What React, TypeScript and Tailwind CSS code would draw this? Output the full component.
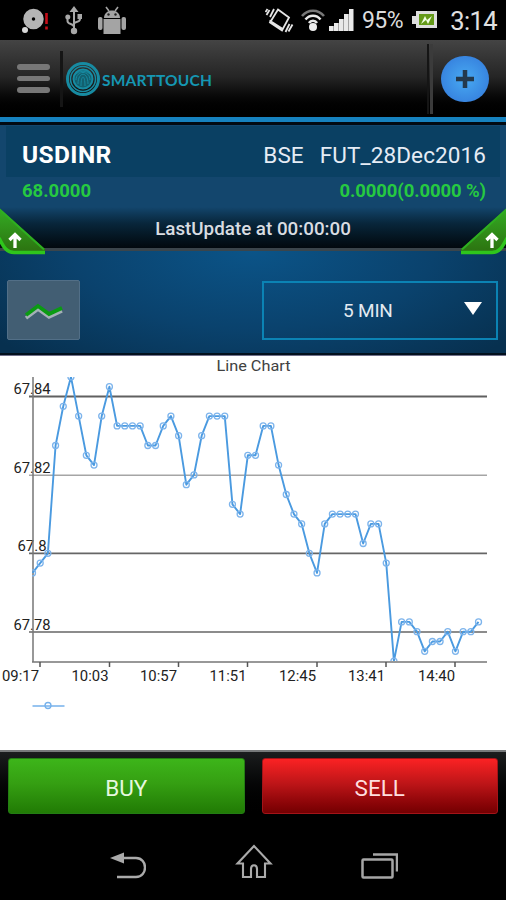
import type { ReactNode } from 'react';

// Distance below the 67.84 grid line, in ticks of 0.0025
const ticks = [
  18, 17, 16, 5, 1, -2, 2, 6, 7, 2, -1, 3, 3, 3, 3, 5, 5, 3, 2, 4, 9, 8, 4, 2, 2, 2, 11, 12, 6, 6,
  3, 3, 7, 10, 12, 13, 16, 18, 13, 12, 12, 12, 12, 15, 13, 13, 17, 27, 23, 23, 24, 26, 25, 25, 24,
  26, 24, 24, 23,
];

const points = ticks.map((t, i) => ({ x: 32.5 + i * 7.69, y: 41.5 + t * 9.8 }));

const gridLines = [
  { label: '67.84', y: 41.5, x: 13.5, width: 37, color: '#606060', stroke: 2 },
  { label: '67.82', y: 120.2, x: 13.5, width: 37, color: '#a5a5a5', stroke: 1.6 },
  { label: '67.8', y: 198.4, x: 17.5, width: 29, color: '#666666', stroke: 1.7 },
  { label: '67.78', y: 277, x: 13.5, width: 37, color: '#666666', stroke: 1.3 },
];

const times = [
  { label: '09:17', x: 2, tick: 40 },
  { label: '10:03', x: 71.5, tick: 109.5 },
  { label: '10:57', x: 140, tick: 178.5 },
  { label: '11:51', x: 209.5, tick: 247.5 },
  { label: '12:45', x: 279, tick: 317 },
  { label: '13:41', x: 348, tick: 386 },
  { label: '14:40', x: 418, tick: 455 },
];

function StatusBar() {
  return (
    <div className="h-10 bg-black flex items-center justify-between pl-[21px] pr-[9px]">
      <div className="flex items-center">
        <svg width="28" height="26" viewBox="0 0 28 26">
          <circle cx="12.5" cy="12" r="6" fill="none" stroke="#b4b4b4" strokeWidth="8.5" />
          <circle cx="4" cy="23" r="3" fill="#d8d8d8" />
          <path d="M25.5 6v11M25.5 19.5v3" stroke="#c40d18" strokeWidth="2.6" />
        </svg>
        <svg className="ml-[16px]" width="17" height="30" viewBox="0 0 17 30">
          <path d="M9 6v20M9 22C9 18 2.5 20 2.5 16v-4M9 19c0-3 6-1 6-5v-3" fill="none" stroke="#a8a8a8" strokeWidth="2" />
          <path d="M9 1l4.5 6h-9z" fill="#a8a8a8" />
          <circle cx="9" cy="26" r="3.2" fill="#a8a8a8" />
          <circle cx="2.8" cy="12" r="2.5" fill="#a8a8a8" />
          <path d="M12.5 9h4.5v5h-4.5z" fill="#a8a8a8" />
        </svg>
        <svg className="ml-[15px]" width="30" height="30" viewBox="0 0 30 30" fill="#a4a4a4">
          <path d="M7 13C7 3 23 3 23 13z" />
          <path d="M9 2l3 4M21 2l-3 4" stroke="#a4a4a4" strokeWidth="1.6" />
          <circle cx="11.5" cy="9.5" r="1.2" fill="#222" />
          <circle cx="18.5" cy="9.5" r="1.2" fill="#222" />
          <rect x="6.5" y="14" width="17" height="15" />
          <rect x="1" y="12" width="4.5" height="13" rx="2" />
          <rect x="24.5" y="12" width="4.5" height="13" rx="2" />
        </svg>
      </div>
      <div className="flex items-center">
        <svg width="29" height="28" viewBox="0 0 29 28" fill="none" stroke="#e6e6e6" strokeWidth="1.8">
          <path d="M13 3.5l11 8-7 13-12-8zM4.5 14.5l12.5 8" />
          <path d="M1.5 9l3-5M5 11l4-8M.5 6l2-3M24.5 18l-4 8M27.5 18.5l-4 7" />
        </svg>
        <svg className="ml-[7px]" width="24" height="24" viewBox="0 0 24 24" fill="none" strokeWidth="2.6">
          <path d="M1 8C7 1 17 1 23 8" stroke="#777" />
          <path d="M4.5 11.5c4-5 11-5 15 0" stroke="#e8e8e8" />
          <path d="M8 15c2-3 6-3 8 0" stroke="#e8e8e8" />
          <circle cx="12" cy="19" r="4" fill="#eee" />
        </svg>
        <svg className="ml-[4px]" width="25" height="24" viewBox="0 0 25 24" fill="#e9e9e9">
          <path d="M0 18h4.7v5H0zM5 15h4.7v8H5zM10 11h4.7v12H10zM15 6h4.7v17H15zM20 1h4.5v22H20z" />
        </svg>
        <span className="ml-[8px] w-[42px] text-[23px] leading-10 tracking-[-0.6px] text-[#dcdcdc] whitespace-nowrap relative top-px">95%</span>
        <svg className="ml-[8px]" width="26" height="20" viewBox="0 0 26 20">
          <path d="M4 1h21v17H4v-4H0V6h4z" fill="#dedede" />
          <rect x="7" y="4" width="15" height="11" fill="#649a18" />
          <path d="M9 14l4-8 2 4 5-4-4 8-2-4z" fill="#f1ffe4" />
        </svg>
        <span className="ml-[12px] w-[47px] text-[25.5px] leading-10 tracking-[-0.6px] text-[#e0e0e0] whitespace-nowrap text-right relative top-px">3:14</span>
      </div>
    </div>
  );
}

function Header() {
  return (
    <div className="h-[85px] border-b-[3px] border-[#020a12] bg-[#1682bf]">
      <div className="h-[77px] flex items-center bg-linear-to-b from-[#444444] via-[#252525] via-48% to-black">
        <div className="ml-[17px] w-[33px] flex flex-col gap-[6px]">
          <div className="h-[5.5px] rounded-sm bg-[#777777]" />
          <div className="h-[5.5px] rounded-sm bg-[#777777]" />
          <div className="h-[5.5px] rounded-sm bg-[#777777]" />
        </div>
        <div className="ml-[10px] w-[3px] h-[56px] bg-[#151515]" />
        <div className="ml-[3px] flex items-center">
          <svg width="34" height="36" viewBox="0 0 34 36" fill="none" stroke="#178ba2">
            <circle cx="17" cy="18" r="15.5" strokeWidth="3" />
            <circle cx="17" cy="18" r="12.5" strokeWidth="1.5" />
            <circle cx="17" cy="18" r="9.5" strokeWidth="2" fill="#12606f" />
            <path d="M10 19c0-10 14-10 14 0M12 23c0-13 10-13 10 0M15 25c0-12 4-12 4 0M9 14c4-5 12-5 16 0" strokeWidth="1" />
          </svg>
          <span className="ml-[2px] font-['Lato'] font-bold text-[15.5px] leading-6 tracking-[0.2px] text-[#1597b3] whitespace-nowrap relative top-px">
            SMARTTOUCH
          </span>
        </div>
        <div className="ml-auto w-[6px] h-[70px] border-l-2 border-r-[3px] border-l-[#151515] border-r-[#3b3b3b]" />
        <button className="ml-[8px] mr-[17px] w-[48px] h-[46px] rounded-full flex items-center justify-center bg-radial from-[#49aaf2] to-[#3275d8]">
          <svg width="20" height="20" viewBox="0 0 20 20">
            <path d="M10 1v18M1 10h18" stroke="#24394c" strokeWidth="4.5" />
          </svg>
        </button>
      </div>
    </div>
  );
}

function Corner({ side }: { side: 'left' | 'right' }) {
  return (
    <svg
      className={side === 'left' ? 'absolute left-0 top-[82px]' : 'absolute right-0 top-[82px] -scale-x-100'}
      width="46"
      height="49"
      viewBox="0 0 46 49"
    >
      <defs>
        <linearGradient id={`corner-${side}`} x1="0" y1="0" x2="0" y2="1">
          <stop offset="0" stopColor="#34ae24" />
          <stop offset="1" stopColor="#2c7110" />
        </linearGradient>
      </defs>
      <path d="M-2 0L45 42v4H14C6 46 3 40 -2 32z" fill={`url(#corner-${side})`} />
      <path d="M-1 2L44 42.5" fill="none" stroke="#2eae20" strokeWidth="2" />
      <path d="M-1 31C4 41 7 45.5 14 45.5H45" fill="none" stroke="#2fc51c" strokeWidth="3.5" />
    </svg>
  );
}

function UpArrow() {
  return (
    <svg width="16" height="18" viewBox="0 0 16 18">
      <path d="M8 17V4M2.5 9L8 3.5 13.5 9" fill="none" stroke="#fff" strokeWidth="3.3" />
    </svg>
  );
}

function Quote() {
  return (
    <div className="relative h-[126px] bg-[#13466d] pt-px">
      <div className="mx-[6px] h-[51px] bg-[#0a4063] pl-4 pr-[14px] pt-[3px] flex justify-between leading-[52px] whitespace-nowrap text-white">
        <span className="text-[24.5px] font-bold tracking-[0.4px]">USDINR</span>
        <span className="text-[22.5px] tracking-[0.1px] text-[#e6ecf5]">
          BSE<span className="ml-[16px]">FUT_28Dec2016</span>
        </span>
      </div>
      <div className="h-[30px] pl-[22px] pr-5 flex justify-between text-[18.5px] font-bold leading-[28px] text-[#26c941]">
        <span>68.0000</span>
        <span className="tracking-[-0.1px]">0.0000(0.0000 %)</span>
      </div>
      <div className="h-[44px] border-b-[3px] border-[#3b454b] bg-linear-to-b from-[#13466d] via-[#08263b] via-40% to-[#02090e] text-center text-[18.8px] font-medium leading-[45px] text-[#d9dde2]">
        LastUpdate at 00:00:00
      </div>
      <Corner side="left" />
      <Corner side="right" />
      <div className="absolute left-[7px] top-[106px]">
        <UpArrow />
      </div>
      <div className="absolute right-[6px] top-[106px]">
        <UpArrow />
      </div>
    </div>
  );
}

function Toolbar() {
  return (
    <div className="h-[104px] border-b-[2px] border-[#02101d] flex items-start justify-between pl-[7px] pr-2 pt-[29px] bg-[radial-gradient(ellipse_65%_140%_at_50%_0%,#0b5488_0%,#0a426d_55%,#07304f_100%)]">
      <button className="w-[73px] h-[60px] rounded-xs border border-[#526f87] bg-[#425e73] flex items-center justify-center">
        <svg className="mt-1" width="38" height="18" viewBox="0 0 38 18" fill="none">
          <path d="M1 15l12-9 11 8 13-6" stroke="#a4b0b6" strokeWidth="3.5" />
          <path d="M1 12l12-9 11 8 13-6" stroke="#0a9b12" strokeWidth="3.8" />
        </svg>
      </button>
      <button className="mt-px w-[236px] h-[59px] border-2 border-[#0b83b4] flex items-center">
        <span className="ml-[79px] text-[19px] text-[#e4eaf0] tracking-[-0.2px] pt-0.5">5 MIN</span>
        <svg className="ml-auto mr-[13px] mb-1" width="20" height="14" viewBox="0 0 20 14">
          <path d="M1 0h18l-9 13z" fill="#fff" />
        </svg>
      </button>
    </div>
  );
}

function LineChart() {
  const line = points.map((p) => `${p.x},${p.y}`).join(' ');

  return (
    <svg className="block bg-white" width="506" height="395" viewBox="0 0 506 395">
      <defs>
        <clipPath id="plot">
          <rect x="32" y="22" width="455" height="284" />
        </clipPath>
      </defs>
      <path d="M0 .5h506" stroke="#70708a" />
      <text x="216.5" y="16" textLength="74" lengthAdjust="spacingAndGlyphs" className="text-[15px]" fill="#414141">
        Line Chart
      </text>

      {gridLines.map((g) => (
        <g key={g.label}>
          <path d={`M29 ${g.y}H487`} stroke={g.color} strokeWidth={g.stroke} />
          <text x={g.x} y={g.y - 2.5} textLength={g.width} lengthAdjust="spacingAndGlyphs" className="text-[14.5px]" fill="#222">
            {g.label}
          </text>
        </g>
      ))}
      <path d="M33 22v285M32 307h455" fill="none" stroke="#777" strokeWidth="1.5" />
      {times.map((t) => (
        <g key={t.label}>
          <path d={`M${t.tick} 307v5`} stroke="#555" strokeWidth="1.5" />
          <text x={t.x} y="326" textLength="37" lengthAdjust="spacingAndGlyphs" className="text-[14.5px]" fill="#222">
            {t.label}
          </text>
        </g>
      ))}

      <g clipPath="url(#plot)" fill="none" stroke="#4a9ae0">
        <polyline points={line} strokeWidth="1.9" strokeLinejoin="round" />
        {points.map((p) => (
          <circle key={p.x} cx={p.x} cy={p.y} r="3" stroke="#7db4ec" strokeWidth="1.3" />
        ))}
      </g>
      <path d="M32.5 351h32" stroke="#75b1eb" strokeWidth="1.5" />
      <circle cx="48" cy="350.5" r="3" fill="none" stroke="#75b1eb" strokeWidth="1.3" />
    </svg>
  );
}

function TradeButton({ className, children }: { className: string; children: ReactNode }) {
  return (
    <button className={`flex-1 h-[56px] rounded-[3px] border text-[22.5px] leading-none pt-1 ${className}`}>
      {children}
    </button>
  );
}

function NavBar() {
  return (
    <div className="flex-1 flex items-start pt-[32px] pl-[109px]">
      <svg width="37" height="29" viewBox="0 0 37 29">
        <path d="M9 6h18C39 6 39 25 27 25H8" fill="none" stroke="#aaa" strokeWidth="2.4" />
        <path d="M1 6l14-5.5v11z" fill="#aaa" />
      </svg>
      <svg className="ml-[89px] -mt-[8px]" width="38" height="36" viewBox="0 0 38 36">
        <path d="M19 2L2.5 19.5H8V33h8v-8c0-5 6-5 6 0v8h8V19.5h5.5z" fill="none" stroke="#aaa" strokeWidth="2.1" />
      </svg>
      <svg className="ml-[87px]" width="38" height="29" viewBox="0 0 38 29" fill="none" stroke="#a6a6a6" strokeWidth="2.5">
        <rect x="2.5" y="7.5" width="30" height="18" rx="1" />
        <path d="M13 2.5h24v17" />
      </svg>
    </div>
  );
}

export default function App() {
  return (
    <div className="w-[506px] h-[900px] flex flex-col overflow-hidden bg-black font-['Roboto','Liberation_Sans',sans-serif]">
      <StatusBar />
      <Header />
      <Quote />
      <Toolbar />
      <LineChart />
      <div className="h-[70px] shrink-0 flex gap-[17px] px-2 pt-[6px] border-t-2 border-[#77797a] bg-linear-to-b from-[#1b1d1e] to-black">
        <TradeButton className="border-[#237d13] bg-linear-to-b from-[#3db51a] via-[#359f12] via-45% to-[#217b05] text-[#e5f8df]">
          BUY
        </TradeButton>
        <TradeButton className="border-[#a31318] bg-linear-to-b from-[#fb2224] via-[#be1518] via-45% to-[#740002] text-[#ffdede]">
          SELL
        </TradeButton>
      </div>
      <NavBar />
    </div>
  );
}
